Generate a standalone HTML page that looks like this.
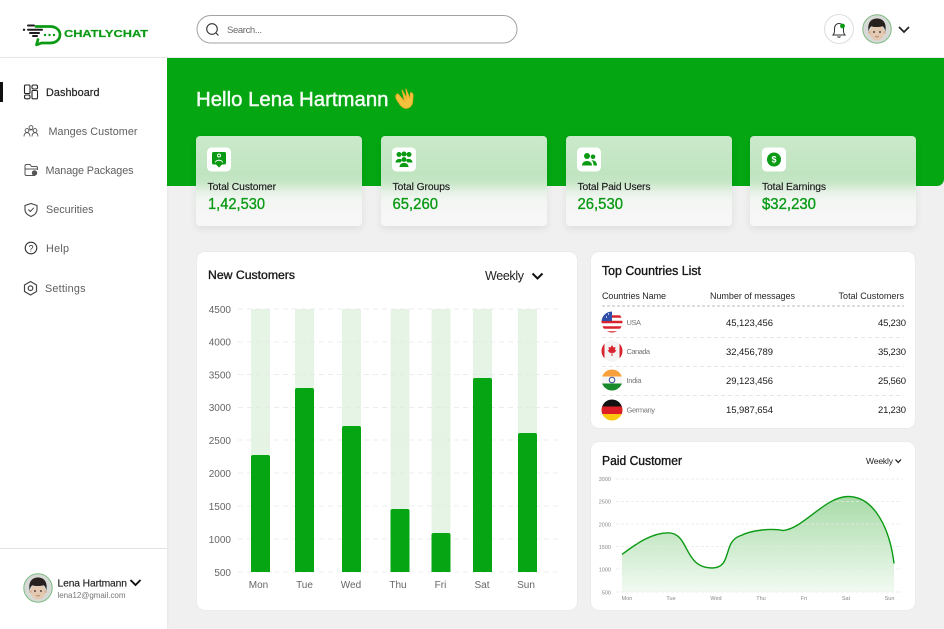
<!DOCTYPE html>
<html lang="en">
<head>
<meta charset="utf-8">
<title>ChatlyChat Dashboard</title>
<style>
html,body{margin:0;padding:0;width:944px;height:629px;overflow:hidden;background:#f0f0f0;font-family:"Liberation Sans",sans-serif}
.abs{position:absolute}
#top{left:0;top:0;width:944px;height:57px;background:#fff;border-bottom:1px solid #e8e8e8}
#side{left:0;top:58px;width:167px;height:571px;background:#fff;box-shadow:1px 0 2px rgba(0,0,0,.04)}
#hero{left:167px;top:58px;width:777px;height:128px;background:#04a612;border-bottom-right-radius:7px}
.stat{top:136px;width:166px;height:90px;border-radius:4px;background:linear-gradient(#cbe9cb 0,#c0e4c0 38px,#c6e6c6 46px,#e6f1e6 56px,#f3f6f3 64px,#f7f7f7 100%);box-shadow:0 3px 8px rgba(0,0,0,.08)}
.panel{background:#fff;border-radius:9px;border:1px solid #ebebeb;box-sizing:border-box}
svg#ov{position:absolute;left:0;top:0}
text{font-family:"Liberation Sans",sans-serif}
</style>
</head>
<body>
<div class="abs" id="top"></div>
<div class="abs" id="side"></div>
<div class="abs" id="hero"></div>
<div class="abs stat" style="left:195.5px"></div>
<div class="abs stat" style="left:380.5px"></div>
<div class="abs stat" style="left:565.5px"></div>
<div class="abs stat" style="left:750px"></div>
<div class="abs panel" style="left:195.5px;top:251px;width:382px;height:360px"></div>
<div class="abs panel" style="left:590px;top:251px;width:326px;height:178px"></div>
<div class="abs panel" style="left:590px;top:441px;width:326px;height:170px"></div>
<div class="abs" style="left:0;top:548px;width:167px;height:1px;background:#e2e2e2"></div>

<svg id="ov" width="944" height="629" viewBox="0 0 944 629" xmlns="http://www.w3.org/2000/svg">
<defs>
<linearGradient id="ar" x1="0" y1="0" x2="0" y2="1"><stop offset="0" stop-color="#a8dba8"/><stop offset="1" stop-color="#f2faf2"/></linearGradient>
<clipPath id="c1"><circle cx="612" cy="322" r="10.5"/></clipPath>
<clipPath id="c2"><circle cx="612" cy="351" r="10.5"/></clipPath>
<clipPath id="c3"><circle cx="612" cy="380" r="10.5"/></clipPath>
<clipPath id="c4"><circle cx="612" cy="410" r="10.5"/></clipPath>
<g id="face">
<circle cx="0" cy="0" r="14.2" fill="#d6d9d6" stroke="#7dbb83" stroke-width="1"/>
<ellipse cx="0" cy="3.500" rx="7.200" ry="8" fill="#e3c9b2"/>
<circle cx="-7.500" cy="3.500" r="1.500" fill="#d8b79c"/><circle cx="7.500" cy="3.500" r="1.500" fill="#d8b79c"/>
<path d="M-8.300 2.500C-10-6-6-10.500 0-10.500S10-6 8.300 2.500C7.800-.5 7-2 5.500-2.800 2-1.800-3-1.800-5.500-2.800-7-2-7.800-.5-8.300 2.500Z" fill="#26211f"/>
<circle cx="-3" cy="3" r=".9" fill="#2b2019"/><circle cx="3" cy="3" r=".9" fill="#2b2019"/>
<path d="M-1.800 7.500Q0 8.300 1.800 7.500" stroke="#a8735a" stroke-width=".8" fill="none"/>
</g>
</defs>

<!-- logo -->
<path d="M36 26.500H50C56 26.500 60 30 60 34.800S56 43 50 43H41.500L36.500 44.800 38 39.500" fill="none" stroke="#0a9a14" stroke-width="2.700" stroke-linejoin="round" stroke-linecap="round"/>
<g fill="#0a9a14"><circle cx="45" cy="35" r="1.200"/><circle cx="49.500" cy="35" r="1.200"/><circle cx="54" cy="35" r="1.200"/></g>
<g stroke="#1d1d1d" stroke-width="2" stroke-linecap="round"><path d="M28 25.500H34"/><path d="M28 29.800H42"/><path d="M30 33H39"/><path d="M33 36H37"/></g>
<circle cx="24" cy="29.800" r="1.200" fill="#1d1d1d"/>
<text x="64" y="37" font-size="10.500" font-weight="700" fill="#0a9a14" textLength="84" lengthAdjust="spacingAndGlyphs" stroke="#0a9a14" stroke-width=".2">CHATLYCHAT</text>

<!-- search -->
<rect x="197" y="15.500" width="320" height="27.500" rx="13.700" fill="#fff" stroke="#a3a3a3"/>
<circle cx="212" cy="29" r="5.300" fill="none" stroke="#333" stroke-width="1.100"/><path d="M216 33L218.500 35.500" stroke="#333" stroke-width="1.100"/>
<text x="227" y="33" font-size="9.500" fill="#6a6a6a" textLength="35">Search...</text>

<!-- bell, avatar -->
<circle cx="839" cy="29" r="14.500" fill="#fff" stroke="#dedede"/>
<path d="M833 35C835 33 834.500 31 834.500 28.500C834.500 25.500 836.500 23.500 839 23.500S843.500 25.500 843.500 28.500C843.500 31 843 33 845 35Z" fill="none" stroke="#333" stroke-width="1"/>
<path d="M837.500 36.500Q839 38 840.500 36.500" fill="none" stroke="#333"/>
<circle cx="842.500" cy="26" r="2.400" fill="#0a9a14"/>
<use href="#face" x="877" y="29"/>
<path d="M899 27L904 32 909 27" fill="none" stroke="#222" stroke-width="1.700"/>

<!-- nav -->
<rect x="0" y="82" width="3" height="20" fill="#111"/>
<g fill="none" stroke="#222" stroke-width="1.100">
<rect x="24.500" y="85" width="5.500" height="8.500" rx="1"/><rect x="32" y="85" width="5.500" height="4" rx="1.500"/>
<rect x="24.500" y="95" width="5.500" height="3.800" rx="1.500"/><rect x="32" y="90.500" width="5.500" height="8.300" rx="1"/>
</g>
<g fill="none" stroke="#555" stroke-width=".9">
<circle cx="31" cy="127.500" r="1.900"/><circle cx="27" cy="130.500" r="1.900"/><circle cx="35" cy="130.500" r="1.900"/>
<path d="M24 136.500C24 133.500 25.500 132.700 27 132.700S30 133.500 30 136.500"/><path d="M32 136.500C32 133.500 33.500 132.700 35 132.700S38 133.500 38 136.500"/><path d="M28.500 130.500Q31 129 33.500 130.500"/>
</g>
<g fill="none" stroke="#555" stroke-width="1">
<path d="M35 175.500H26.500Q25 175.500 25 174V166Q25 164.500 26.500 164.500H30L31.500 166.500H36Q37.500 166.500 37.500 168V170"/><path d="M25 169H37.500"/>
</g>
<circle cx="34.500" cy="173" r="2.700" fill="#555"/>
<path d="M31 203.500L37 205.500V210C37 213 34.500 215 31 216.500 27.500 215 25 213 25 210V205.500Z" fill="none" stroke="#444" stroke-width="1.100"/>
<path d="M28.300 209.500L30.300 211.500 33.800 207.800" fill="none" stroke="#444" stroke-width="1"/>
<circle cx="31" cy="248" r="5.800" fill="none" stroke="#333" stroke-width="1.100"/>
<text x="31" y="251.300" font-size="9" text-anchor="middle" fill="#333">?</text>
<path d="M30.500 281.500L36.500 285V291.500L30.500 295 24.500 291.500V285Z" fill="none" stroke="#444" stroke-width="1.200" stroke-linejoin="round"/>
<circle cx="30.500" cy="288.200" r="2.300" fill="none" stroke="#444" stroke-width="1.200"/>
<g font-size="10.800">
<text x="46" y="96" fill="#222" stroke="#222" stroke-width=".2" textLength="53.500">Dashboard</text>
<text x="48.500" y="135" fill="#5e5e5e" textLength="89">Manges Customer</text>
<text x="45.500" y="174" fill="#5e5e5e" textLength="88">Manage Packages</text>
<text x="46" y="213" fill="#5e5e5e" textLength="47.500">Securities</text>
<text x="46" y="252" fill="#5e5e5e" textLength="23">Help</text>
<text x="45" y="292" fill="#5e5e5e" textLength="40.500">Settings</text>
</g>

<!-- side user -->
<use href="#face" x="38" y="588"/>
<text x="57.500" y="586.500" font-size="10.300" fill="#222" stroke="#222" stroke-width=".15" textLength="69.500">Lena Hartmann</text>
<path d="M130.500 580L135.500 585 140.500 580" fill="none" stroke="#111" stroke-width="1.900"/>
<text x="57.500" y="598" font-size="8" fill="#777" textLength="68">lena12@gmail.com</text>

<!-- hero -->
<text x="196" y="106" font-size="20" fill="#f3fbf3" stroke="#f3fbf3" stroke-width=".45" textLength="192.500" lengthAdjust="spacingAndGlyphs">Hello Lena Hartmann</text>
<g transform="translate(394,88)">
<path d="M4 6L11 14 8 2 13 11 12 1 16 11 16.500 5C18 4 19 6 19 8L18.500 14C18 18.500 14 21 10.500 20 7 19 5 15 3 12 1 9 2 6 4 6Z" fill="#f5c23e" stroke="#f0b02c" stroke-width="1" stroke-linejoin="round"/>
</g>

<!-- stat tiles -->
<g fill="#fff">
<rect x="207" y="147.500" width="24" height="24" rx="4.500"/><rect x="392" y="147.500" width="24" height="24" rx="4.500"/><rect x="577" y="147.500" width="24" height="24" rx="4.500"/><rect x="762" y="147.500" width="24" height="24" rx="4.500"/>
</g>
<path d="M213.500 152H224.500Q226 152 226 153.500V163Q226 164.500 224.500 164.500H222L219 167.500 216 164.500H213.500Q212 164.500 212 163V153.500Q212 152 213.500 152Z" fill="#0a9a14"/>
<circle cx="219" cy="155.500" r="1.500" fill="none" stroke="#fff" stroke-width=".9"/>
<path d="M215.500 162.500C215.500 159.500 222.500 159.500 222.500 162.500" fill="none" stroke="#fff" stroke-width=".9"/>
<g fill="#0a9a14">
<circle cx="399" cy="154.500" r="2.500"/><circle cx="404" cy="154" r="2.500"/><circle cx="409" cy="154.500" r="2.500"/>
<path d="M395.500 162.500C395.500 158 402 158 402 160.500L400.500 162.500Z"/><path d="M412.500 162.500C412.500 158 406 158 406 160.500L407.500 162.500Z"/>
<circle cx="404" cy="159.500" r="2.400"/><path d="M399.500 167C399.500 161.500 408.500 161.500 408.500 167Z"/>
<circle cx="587" cy="156" r="3"/><path d="M582 165.500C582 159.500 592 159.500 592 165.500Z"/>
<circle cx="593" cy="156.800" r="2.300"/><path d="M593.500 165.500H597C597 161 593.500 160 591.500 160.500 593 161.500 593.500 163 593.500 165.500Z"/>
<circle cx="774" cy="159.500" r="7"/>
</g>
<text x="774" y="162.500" font-size="9" font-weight="700" fill="#fff" text-anchor="middle">$</text>
<g font-size="10.300" fill="#1b1b1b" stroke="#1b1b1b" stroke-width=".15">
<text x="207.500" y="190" textLength="68.500">Total Customer</text>
<text x="392.500" y="190" textLength="57.500">Total Groups</text>
<text x="577.500" y="190" textLength="73">Total Paid Users</text>
<text x="762" y="190" textLength="64">Total Earnings</text>
</g>
<g font-size="16" fill="#0a9a14" stroke="#0a9a14" stroke-width=".35">
<text x="208" y="209" textLength="57" lengthAdjust="spacingAndGlyphs">1,42,530</text>
<text x="392.500" y="209" textLength="45.500" lengthAdjust="spacingAndGlyphs">65,260</text>
<text x="577.500" y="209" textLength="45.500" lengthAdjust="spacingAndGlyphs">26,530</text>
<text x="762" y="209" textLength="54" lengthAdjust="spacingAndGlyphs">$32,230</text>
</g>

<!-- new customers -->
<text x="208" y="279" font-size="12" fill="#1a1a1a" stroke="#1a1a1a" stroke-width=".35" textLength="87" lengthAdjust="spacingAndGlyphs">New Customers</text>
<text x="485" y="280" font-size="12.500" fill="#222" textLength="39">Weekly</text>
<path d="M532.500 273.500L537.500 278.500 542.500 273.500" fill="none" stroke="#111" stroke-width="2"/>
<g fill="#e5f4e5">
<rect x="251" y="309" width="19" height="263"/><rect x="295" y="309" width="19" height="263"/><rect x="342" y="309" width="19" height="263"/><rect x="390.500" y="309" width="19" height="263"/><rect x="431.500" y="309" width="19" height="263"/><rect x="473" y="309" width="19" height="263"/><rect x="518" y="309" width="19" height="263"/>
</g>
<g stroke="#e6e6e6" stroke-width=".8" stroke-dasharray="5 4">
<path d="M238 309H562M238 342H562M238 374.500H562M238 407.500H562M238 440H562M238 473H562M238 506H562M238 539H562M238 572H562"/>
</g>
<g fill="#05a513">
<path d="M251 572V457Q251 455 253 455H268Q270 455 270 457V572Z"/>
<path d="M295 572V390Q295 388 297 388H312Q314 388 314 390V572Z"/>
<path d="M342 572V428Q342 426 344 426H359Q361 426 361 428V572Z"/>
<path d="M390.500 572V511Q390.500 509 392.500 509H407.500Q409.500 509 409.500 511V572Z"/>
<path d="M431.500 572V535Q431.500 533 433.500 533H448.500Q450.500 533 450.500 535V572Z"/>
<path d="M473 572V380Q473 378 475 378H490Q492 378 492 380V572Z"/>
<path d="M518 572V435Q518 433 520 433H535Q537 433 537 435V572Z"/>
</g>
<g font-size="10" fill="#666" text-anchor="end">
<text x="231" y="313">4500</text><text x="231" y="345.500">4000</text><text x="231" y="378.500">3500</text><text x="231" y="411">3000</text><text x="231" y="444">2500</text><text x="231" y="477">2000</text><text x="231" y="510">1500</text><text x="231" y="543">1000</text><text x="231" y="576">500</text>
</g>
<g font-size="10" fill="#666" text-anchor="middle">
<text x="258.500" y="588">Mon</text><text x="304.500" y="588">Tue</text><text x="351" y="588">Wed</text><text x="398" y="588">Thu</text><text x="440.500" y="588">Fri</text><text x="482" y="588">Sat</text><text x="526" y="588">Sun</text>
</g>

<!-- top countries -->
<text x="602" y="275" font-size="12.500" fill="#151515" stroke="#151515" stroke-width=".35" textLength="99" lengthAdjust="spacingAndGlyphs">Top Countries List</text>
<g font-size="9" fill="#262626">
<text x="602" y="299" textLength="64">Countries Name</text>
<text x="710" y="299" textLength="85">Number of messages</text>
<text x="838.500" y="299" textLength="65.500">Total Customers</text>
</g>
<path d="M602 306H904" stroke="#bdbdbd" stroke-dasharray="3 2" stroke-width="1"/>
<path d="M602 337.500H904M602 366.500H904M602 395.500H904" stroke="#e6e6e6" stroke-dasharray="4 3" stroke-width="1"/>
<g clip-path="url(#c1)">
<rect x="601" y="311" width="22" height="22" fill="#fff"/>
<path d="M601 316.500H623M601 322H623M601 327.500H623M601 332.500H623" stroke="#d8232f" stroke-width="2.400"/>
<rect x="601" y="311" width="11" height="10" fill="#2f4fa8"/>
<path d="M604 314h1M608 314h1M606 317h1" stroke="#fff" stroke-width="1.200"/>
</g>
<g clip-path="url(#c2)">
<rect x="601" y="340" width="22" height="22" fill="#f3f3f3"/>
<rect x="601" y="340" width="3.500" height="22" fill="#d8232f"/><rect x="619.500" y="340" width="3.500" height="22" fill="#d8232f"/>
<path d="M612 345L613.500 347.500 615.500 347 615 350 616.500 350.500 614 353 612.500 352.800V356H611.500V352.800L610 353 607.500 350.500 609 350 608.500 347 610.500 347.500Z" fill="#d8232f"/>
</g>
<g clip-path="url(#c3)">
<rect x="601" y="369" width="22" height="7.500" fill="#f7a03c"/><rect x="601" y="376.500" width="22" height="7" fill="#f6f6f6"/><rect x="601" y="383.500" width="22" height="8" fill="#178a2b"/>
<circle cx="612" cy="380" r="2.800" fill="none" stroke="#34508f" stroke-width="1"/>
</g>
<g clip-path="url(#c4)">
<rect x="601" y="399" width="22" height="7.500" fill="#111"/><rect x="601" y="406.500" width="22" height="7.500" fill="#dc1f26"/><rect x="601" y="414" width="22" height="7" fill="#fbc70f"/>
</g>
<g font-size="7.500" fill="#777">
<text x="626.500" y="325" textLength="14.500">USA</text><text x="626.500" y="354" textLength="23.500">Canada</text><text x="626.500" y="383" textLength="15">India</text><text x="626.500" y="412.500" textLength="28.500">Germany</text>
</g>
<g font-size="9.500" fill="#1a1a1a">
<text x="726" y="326" textLength="47">45,123,456</text><text x="726" y="355" textLength="47">32,456,789</text><text x="726" y="384" textLength="47">29,123,456</text><text x="726" y="413" textLength="47">15,987,654</text>
<text x="878" y="326" textLength="28">45,230</text><text x="878" y="355" textLength="28">35,230</text><text x="878" y="384" textLength="28">25,560</text><text x="878" y="413" textLength="28">21,230</text>
</g>

<!-- paid customer -->
<text x="602" y="465" font-size="12.500" fill="#151515" stroke="#151515" stroke-width=".35" textLength="80" lengthAdjust="spacingAndGlyphs">Paid Customer</text>
<text x="866" y="464" font-size="8.500" fill="#222" textLength="27">Weekly</text>
<path d="M895.500 459.500L898.200 462.500 901 459.500" fill="none" stroke="#111" stroke-width="1.200"/>
<path d="M622 554.500C637 543 652 533 668 532.800C690 532.800 683 568 712 568C733 568 722 541 741 535.500C752 530 772 528 783 530.500C803 529 825 496.500 848 496.500C875 496.500 890 530 894 563.500V592H622Z" fill="url(#ar)"/>
<g stroke="#e8e8e8" stroke-width=".8" stroke-dasharray="3 2">
<path d="M616 479H903M616 501.500H902M616 524H902M616 546.500H902M616 569H902M616 592H902"/>
</g>
<path d="M622 554.500C637 543 652 533 668 532.800C690 532.800 683 568 712 568C733 568 722 541 741 535.500C752 530 772 528 783 530.500C803 529 825 496.500 848 496.500C875 496.500 890 530 894 563.500" fill="none" stroke="#0a9a14" stroke-width="1.400"/>
<g font-size="5.500" fill="#888" text-anchor="end">
<text x="611" y="481">3000</text><text x="611" y="503.500">2500</text><text x="611" y="526.500">2000</text><text x="611" y="549">1500</text><text x="611" y="571.500">1000</text><text x="611" y="594.500">500</text>
</g>
<g font-size="5.500" fill="#888" text-anchor="middle">
<text x="627" y="600">Mon</text><text x="671" y="600">Tue</text><text x="716" y="600">Wed</text><text x="761" y="600">Thu</text><text x="804" y="600">Fri</text><text x="846" y="600">Sat</text><text x="889.500" y="600">Sun</text>
</g>
</svg>
</body>
</html>
